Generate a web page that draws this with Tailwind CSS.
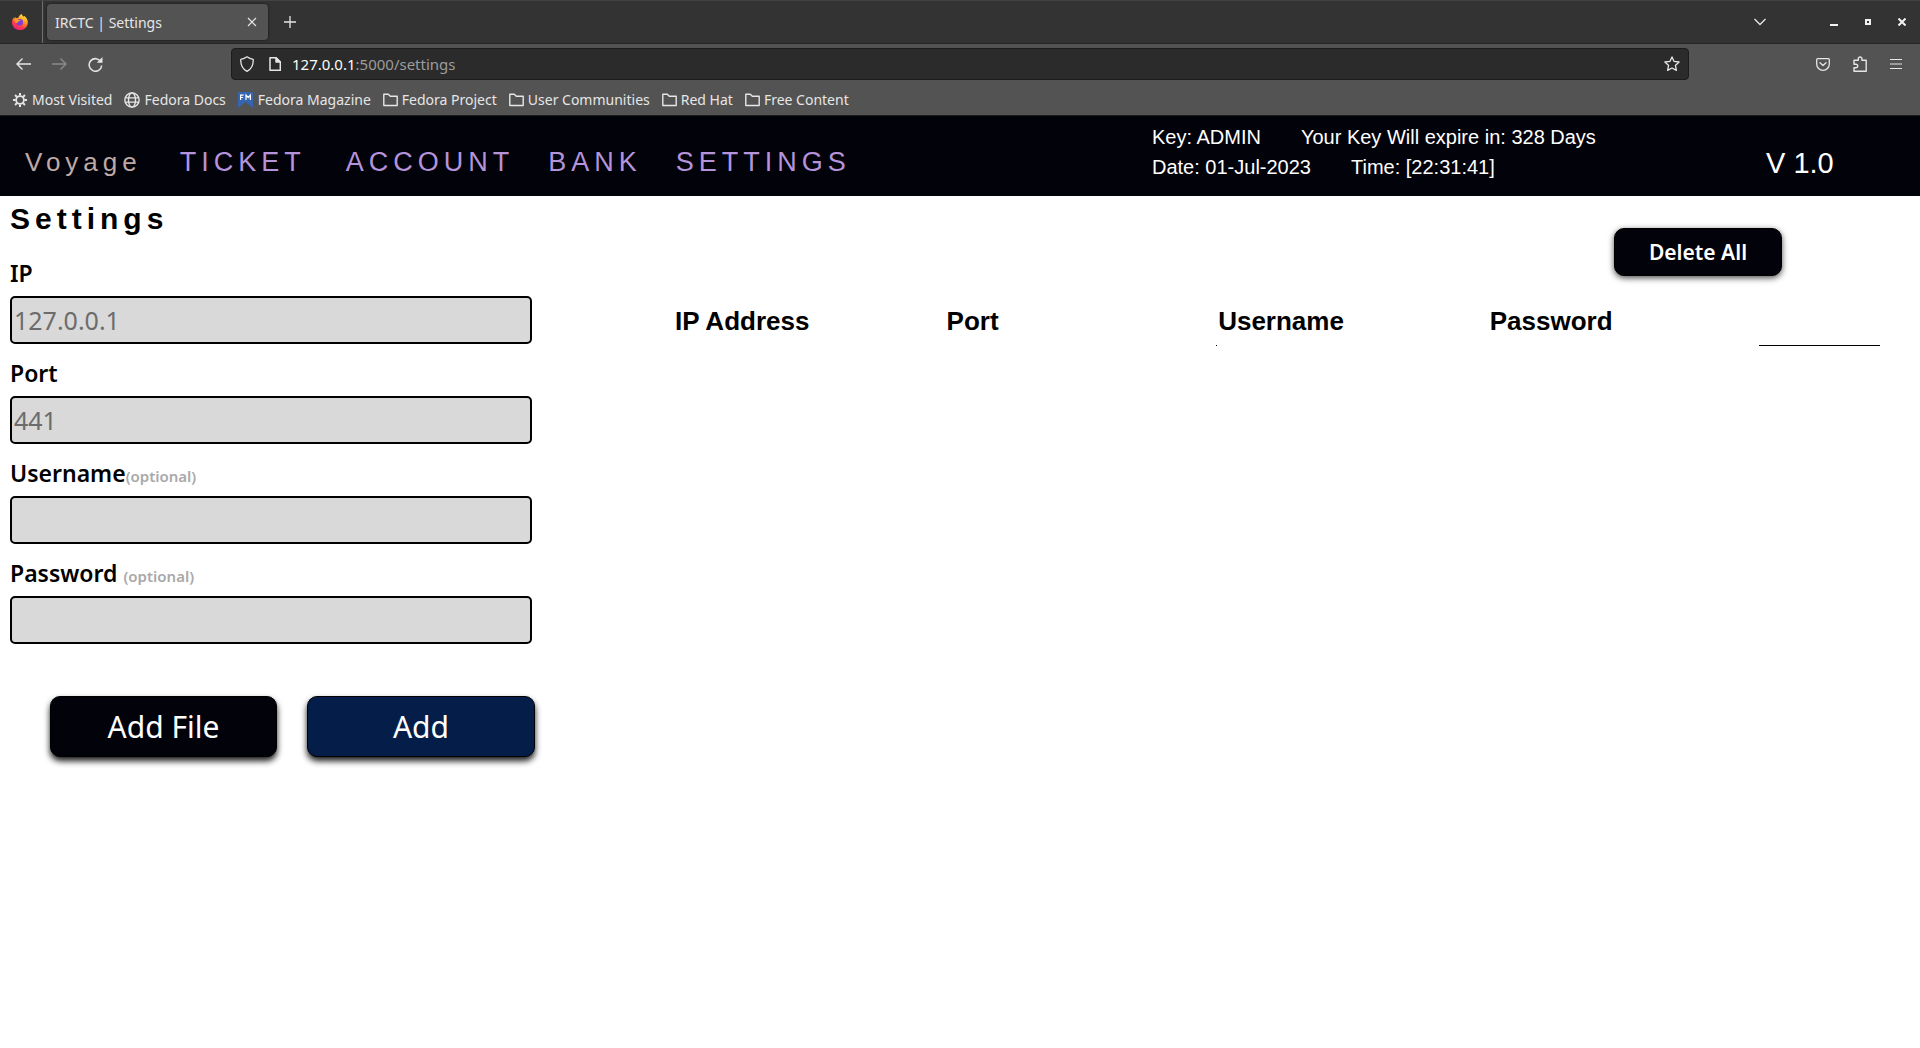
<!DOCTYPE html>
<html lang="en">
<head>
<meta charset="utf-8">
<title>IRCTC | Settings</title>
<script src="https://cdn.jsdelivr.net/npm/@tailwindcss/browser@4"></script>
</head>
<body class="min-h-screen bg-white font-['Noto_Sans',sans-serif] text-black">

<!-- Browser window -->
<div class="bg-[#535353] text-sm text-[#e6e6e6]">
  <div class="flex h-11 items-center border-t border-b border-t-[#424242] border-b-[#252525] bg-[#333333]">
    <div class="flex h-full w-[43px] items-center border-r border-[#707070] pl-3">
      <svg class="size-4" viewBox="0 0 16 16" role="img" aria-label="Firefox">
        <defs>
          <linearGradient id="fx" x1="0.8" y1="0" x2="0.3" y2="1"><stop offset="0" stop-color="#fff04a"/><stop offset=".4" stop-color="#ff9a1f"/><stop offset=".7" stop-color="#ff4148"/><stop offset="1" stop-color="#ee1a86"/></linearGradient>
        </defs>
        <path fill="url(#fx)" d="M9.7 0c.2 1 .9 1.900 2 2.800l.3-1.100c2.300 1.800 3.700 3.600 3.800 6.500C15.800 12.600 12.500 16 8 16S0 12.600 0 8.400C0 6.300.8 4.700 1.800 3.500l.3 1.100L3.400 2.800l.4 1.400c.8-.3 1.600-.3 2.400-.1C6.500 2.500 7.900.9 9.700 0z"/>
        <circle cx="7.700" cy="8.200" r="3.300" fill="#7a3ce0"/>
        <path fill="#ff9a1f" d="M2.200 5.200c2-.9 3.600-.5 4.600.7L8.500 6c0 .8-1.400 1.100-2 1.400-.7.400-.8 1.300-1.500 1.600-1.200.2-2.500-1.600-2.800-3.800z"/>
      </svg>
    </div>
    <div class="ml-1 flex h-9 w-[221px] items-center justify-between rounded bg-[#535353] pr-[11px] pl-2 shadow-[0_0_3px_rgba(0,0,0,0.6)]">
      <span class="pt-px">IRCTC | Settings</span>
      <button aria-label="Close tab"><svg class="size-[10px]" viewBox="0 0 10 10" fill="none" stroke="currentColor" stroke-width="1.200"><path d="M1 1l8 8M9 1l-8 8"/></svg></button>
    </div>
    <button aria-label="New tab" class="ml-4"><svg class="size-3" viewBox="0 0 12 12" fill="none" stroke="currentColor" stroke-width="1.300"><path d="M6 0v12M0 6h12"/></svg></button>
    <div class="ml-auto flex items-center pr-[14px]">
      <button aria-label="List all tabs" class="mr-16"><svg class="h-2 w-3" viewBox="0 0 12 8" fill="none" stroke="currentColor" stroke-width="1.300"><path d="M.5 1L6 6.500 11.500 1"/></svg></button>
      <button aria-label="Minimize" class="mr-[27px]"><svg class="h-2 w-2" viewBox="0 0 8 8"><path fill="#f2f2f2" d="M0 6h8v2H0z"/></svg></button>
      <button aria-label="Restore" class="mr-[27px]"><svg class="size-[6px]" viewBox="0 0 6 6" fill="none" stroke="#f2f2f2" stroke-width="2"><path d="M1 1h4v4H1z"/></svg></button>
      <button aria-label="Close window"><svg class="size-2" viewBox="0 0 8 8" fill="none" stroke="#f2f2f2" stroke-width="2"><path d="M.5.5l7 7M7.500.5l-7 7"/></svg></button>
    </div>
  </div>

  <div class="flex h-10 items-center">
    <div class="flex w-[231px] shrink-0 items-center gap-[21px] pl-4">
      <button aria-label="Back"><svg class="block h-3 w-[15px]" viewBox="0 0 15 12" fill="none" stroke="currentColor" stroke-width="1.400"><path d="M15 6H1M6.500.5L1 6l5.500 5.500"/></svg></button>
      <button aria-label="Forward" disabled class="text-[#8b8b8b]"><svg class="block h-3 w-[15px]" viewBox="0 0 15 12" fill="none" stroke="currentColor" stroke-width="1.400"><path d="M0 6h14M8.500.5L14 6l-5.500 5.500"/></svg></button>
      <button aria-label="Reload"><svg class="block size-[15px]" viewBox="0 0 15 15" fill="none" stroke="currentColor" stroke-width="1.500"><path d="M13 5A6.300 6.300 0 1 0 13.700 8.500"/><path fill="currentColor" stroke="none" d="M14.500 0v5.800H8.800z"/></svg></button>
    </div>
    <div class="flex h-8 grow items-center rounded border border-[#1c1c1c] bg-[#2b2b2b] px-2">
      <svg class="h-4 w-[14px]" viewBox="0 0 14 16" fill="none" stroke="currentColor" stroke-width="1.300" stroke-linejoin="round"><path d="M7 .8c2 1.500 4 2.200 6.200 2.500.3 5-1.200 9.500-6.200 12C2 12.800.5 8.300.8 3.300 3 3 5 2.300 7 .8z"/></svg>
      <svg class="ml-[15px] h-[14px] w-3" viewBox="0 0 12 14" fill="none" stroke="currentColor" stroke-width="1.500" stroke-linejoin="round"><path d="M1 .8h6l4.300 4.200v8.300H1z"/><path fill="currentColor" d="M7 .8V5h4.300z"/></svg>
      <a href="#" class="ml-[11px] grow pt-px text-[15px] text-[#9c9c9c]"><span class="text-[#fbfbfb]">127.0.0.1</span>:5000/settings</a>
      <button aria-label="Bookmark this page"><svg class="size-4" viewBox="0 0 16 16" fill="none" stroke="currentColor" stroke-width="1.300" stroke-linejoin="round"><path d="M8 .9l2.100 4.500 5 .6-3.700 3.400 1 5L8 12l-4.400 2.400 1-5L.9 6l5-.6z"/></svg></button>
    </div>
    <div class="flex w-[231px] shrink-0 items-center justify-end gap-[23px] pr-[18px]">
      <button aria-label="Save to Pocket"><svg class="block h-[13px] w-[14px]" viewBox="0 0 14 13" fill="none" stroke="currentColor" stroke-width="1.300" stroke-linejoin="round" stroke-linecap="round"><path d="M1.700.7h10.600q1 0 1 1V6a6.300 6.300 0 0 1-12.600 0V1.700q0-1 1-1z"/><path d="M4 4.800L7 7.500l3-2.700"/></svg></button>
      <button aria-label="Extensions"><svg class="block h-4 w-[14px]" viewBox="0 0 14 16" fill="none" stroke="currentColor" stroke-width="1.400" stroke-linejoin="round"><path d="M1 4.300h4.300V2.800a1.800 1.800 0 0 1 3.600 0v1.500h4.300v11H1v-3.500h2a1.800 1.800 0 0 0 0-3.600H1z"/></svg></button>
      <button aria-label="Open menu"><svg class="block h-3 w-3" viewBox="0 0 12 12" stroke="currentColor" stroke-width="1.200"><path d="M0 1.500h12M0 6h12M0 10.500h12"/></svg></button>
    </div>
  </div>

  <nav aria-label="Bookmarks" class="flex h-8 items-center gap-3 border-b border-[#1b1b1b] pl-[13px]">
    <a href="#" class="flex items-center gap-[5px]"><svg class="size-[14px]" viewBox="0 0 14 14" fill="none" stroke="currentColor"><circle cx="7" cy="7" r="3.900" stroke-width="1.800"/><path stroke-width="2" d="M7 0v2.500M7 11.500V14M0 7h2.500M11.500 7H14M2.050 2.050l1.800 1.800M10.150 10.150l1.800 1.800M2.050 11.950l1.800-1.800M10.150 3.850l1.800-1.800"/></svg>Most Visited</a>
    <a href="#" class="flex items-center gap-1"><svg class="size-4" viewBox="0 0 15 15" fill="none" stroke="currentColor" stroke-width="1.300"><circle cx="7.500" cy="7.500" r="6.700"/><ellipse cx="7.500" cy="7.500" rx="3.300" ry="6.700"/><path d="M1 5.500h13M1 9.500h13"/></svg>Fedora Docs</a>
    <a href="#" class="flex items-center gap-[5px]"><svg class="h-4 w-[15px]" viewBox="0 0 15 16"><path fill="#3565ae" d="M0 0h15v16l-7.500-6L0 16z"/><path stroke="#fff" stroke-width="1.200" fill="none" d="M2.600 8V3.100h3M2.600 5.500h2.600M8 8V3l2.200 2.500L12.400 3v5"/></svg>Fedora Magazine</a>
    <a href="#" class="flex items-center gap-1"><svg class="h-[14px] w-[15px]" viewBox="0 0 15 14" fill="none" stroke="currentColor" stroke-width="1.400" stroke-linejoin="round"><path d="M.8 12.500V1.200h4.500l2 2h6.900v9.300z"/></svg>Fedora Project</a>
    <a href="#" class="flex items-center gap-1"><svg class="h-[14px] w-[15px]" viewBox="0 0 15 14" fill="none" stroke="currentColor" stroke-width="1.400" stroke-linejoin="round"><path d="M.8 12.500V1.200h4.500l2 2h6.900v9.300z"/></svg>User Communities</a>
    <a href="#" class="flex items-center gap-1"><svg class="h-[14px] w-[15px]" viewBox="0 0 15 14" fill="none" stroke="currentColor" stroke-width="1.400" stroke-linejoin="round"><path d="M.8 12.500V1.200h4.500l2 2h6.900v9.300z"/></svg>Red Hat</a>
    <a href="#" class="flex items-center gap-1"><svg class="h-[14px] w-[15px]" viewBox="0 0 15 14" fill="none" stroke="currentColor" stroke-width="1.400" stroke-linejoin="round"><path d="M.8 12.500V1.200h4.500l2 2h6.900v9.300z"/></svg>Free Content</a>
  </nav>
</div>

<!-- Site header -->
<header class="flex h-20 bg-[#02020a] font-['Liberation_Sans',sans-serif] text-white">
  <nav aria-label="Main" class="flex items-center pt-3 pl-[25px] text-[27px] tracking-[5px] text-[#b493da]">
    <a href="#" class="text-[26px] text-[#bfa9a4]">Voyage</a>
    <a href="#" class="ml-[38px]">TICKET</a>
    <a href="#" class="ml-10">ACCOUNT</a>
    <a href="#" class="ml-[34px]">BANK</a>
    <a href="#" class="ml-[34px]">SETTINGS</a>
  </nav>
  <div class="ml-auto w-[614px] pt-[6px] text-xl leading-[30px]">
    <div class="flex gap-10"><span>Key: ADMIN</span><span>Your Key Will expire in: 328 Days</span></div>
    <div class="flex gap-10"><span>Date: 01-Jul-2023</span><span>Time: [22:31:41]</span></div>
  </div>
  <div class="w-[154px] pt-[29px] text-[29px] leading-[36px]">V 1.0</div>
</header>

<!-- Proxy settings -->
<main class="flex gap-[138px] pr-10 pl-[10px]">
  <form class="w-[525px] shrink-0">
    <h1 class="font-['Liberation_Sans',sans-serif] text-[30px] leading-[46px] font-bold tracking-[5px]">Settings</h1>
    <div class="mt-3 flex w-[522px] flex-col text-[23px] font-semibold">
      <label for="ip" class="h-[42px] leading-[38px]">IP</label>
      <input id="ip" placeholder="127.0.0.1" class="h-12 rounded-[5px] border-2 border-black bg-[#d9d9d9] px-0.5 text-[25px] font-normal placeholder:text-[#6c6c6c]">
      <label for="port" class="mt-[10px] h-[42px] leading-[38px]">Port</label>
      <input id="port" placeholder="441" class="h-12 rounded-[5px] border-2 border-black bg-[#d9d9d9] px-0.5 text-[25px] font-normal placeholder:text-[#6c6c6c]">
      <label for="user" class="mt-[10px] h-[42px] leading-[38px]">Username<span class="text-[15px] text-[#a9a9a9]">(optional)</span></label>
      <input id="user" class="h-12 rounded-[5px] border-2 border-black bg-[#d9d9d9] px-0.5 text-[25px] font-normal">
      <label for="pass" class="mt-[10px] h-[42px] leading-[38px]">Password <span class="text-[15px] text-[#a9a9a9]">(optional)</span></label>
      <input id="pass" type="password" class="h-12 rounded-[5px] border-2 border-black bg-[#d9d9d9] px-0.5 text-[25px] font-normal">
    </div>
    <div class="mt-[52px] ml-10 flex justify-between text-[30px] text-white">
      <button type="button" class="h-[61px] w-[227px] rounded-[10px] border border-black bg-[#02020a] shadow-[0_4px_6px_rgba(0,0,0,0.9)]">Add File</button>
      <button type="button" class="h-[61px] w-[228px] rounded-[10px] border border-black bg-[#051e49] shadow-[0_4px_6px_rgba(0,0,0,0.9)]">Add</button>
    </div>
  </form>

  <section class="grow pt-8">
    <div class="flex justify-end pr-[98px]">
      <button class="h-12 w-[168px] rounded-[10px] border border-black bg-[#02020a] text-[21px] leading-[44px] font-semibold text-white shadow-[0_2px_6px_rgba(0,0,0,0.7)]">Delete All</button>
    </div>
    <table class="mt-7 w-full table-fixed border-separate border-spacing-0 text-left font-['Liberation_Sans',sans-serif] text-[26px] leading-[34px] font-bold">
      <colgroup><col><col><col><col><col class="w-[10%]"></colgroup>
      <thead>
        <tr class="h-[42px]">
          <th class="pb-2 pl-0.5">IP Address</th>
          <th class="pb-2 pl-0.5">Port</th>
          <th class="relative pb-2 pl-0.5">Username<span class="absolute bottom-0 left-0 size-px bg-black"></span></th>
          <th class="pb-2 pl-0.5">Password</th>
          <th class="border-b border-black" aria-label="Actions"></th>
        </tr>
      </thead>
    </table>
  </section>
</main>
</body>
</html>
